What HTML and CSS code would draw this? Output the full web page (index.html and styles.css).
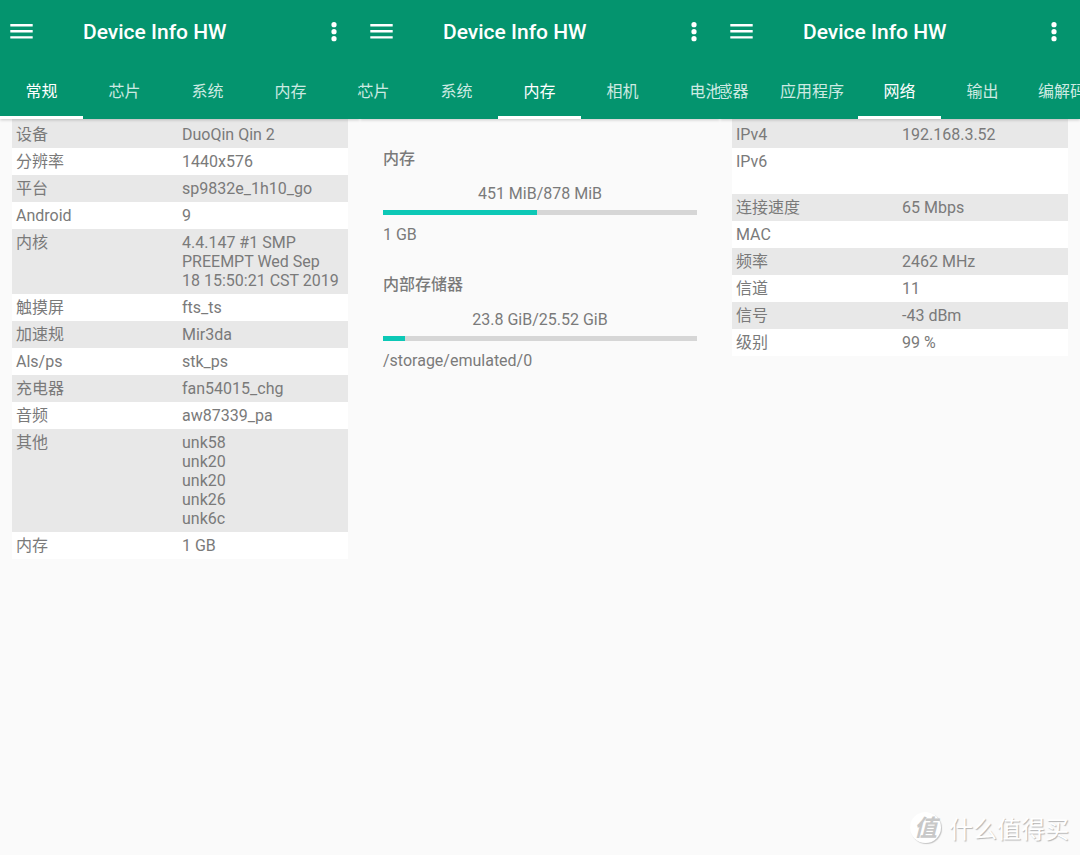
FILE: index.html
```html
<!DOCTYPE html>
<html lang="zh-CN">
<head>
<meta charset="utf-8">
<meta name="viewport" content="width=device-width, initial-scale=1">
<title>Device Info HW</title>
<link rel="stylesheet" href="styles.css">
</head>
<body>
<svg class="symbols" aria-hidden="true">
  <symbol id="menu" viewBox="0 0 24 16"><path d="M0.3 0h22.4v2.4H0.3zM0.3 6.1h22.4v2.4H0.3zM0.3 12.2h22.4v2.4H0.3z"/></symbol>
  <symbol id="more" viewBox="0 0 6 20"><circle cx="3" cy="2.7" r="2.6"/><circle cx="3" cy="9.7" r="2.6"/><circle cx="3" cy="16.7" r="2.6"/></symbol>
</svg>
<main class="screens">
  <section class="screen">
    <header class="appbar">
      <div class="toolbar">
        <button class="icon-button" aria-label="菜单"><svg class="menu-icon"><use href="#menu"/></svg></button>
        <h1 class="title">Device Info HW</h1>
        <button class="icon-button" aria-label="更多"><svg class="more-icon"><use href="#more"/></svg></button>
      </div>
      <nav class="tabs">
        <button class="tab active">常规</button><button class="tab">芯片</button><button class="tab">系统</button><button class="tab">内存</button><button class="tab">相机</button>
      </nav>
    </header>
    <table class="info">
      <tr><th scope="row">设备</th><td>DuoQin Qin 2</td></tr>
      <tr><th scope="row">分辨率</th><td>1440x576</td></tr>
      <tr><th scope="row">平台</th><td>sp9832e_1h10_go</td></tr>
      <tr><th scope="row">Android</th><td>9</td></tr>
      <tr><th scope="row">内核</th><td>4.4.147 #1 SMP<br>PREEMPT Wed Sep<br>18 15:50:21 CST 2019</td></tr>
      <tr><th scope="row">触摸屏</th><td>fts_ts</td></tr>
      <tr><th scope="row">加速规</th><td>Mir3da</td></tr>
      <tr><th scope="row">Als/ps</th><td>stk_ps</td></tr>
      <tr><th scope="row">充电器</th><td>fan54015_chg</td></tr>
      <tr><th scope="row">音频</th><td>aw87339_pa</td></tr>
      <tr><th scope="row">其他</th><td>unk58<br>unk20<br>unk20<br>unk26<br>unk6c</td></tr>
      <tr><th scope="row">内存</th><td>1 GB</td></tr>
    </table>
  </section>

  <section class="screen">
    <header class="appbar">
      <div class="toolbar">
        <button class="icon-button" aria-label="菜单"><svg class="menu-icon"><use href="#menu"/></svg></button>
        <h1 class="title">Device Info HW</h1>
        <button class="icon-button" aria-label="更多"><svg class="more-icon"><use href="#more"/></svg></button>
      </div>
      <nav class="tabs tabs-memory">
        <button class="tab">芯片</button><button class="tab">系统</button><button class="tab active">内存</button><button class="tab">相机</button><button class="tab">电池</button>
      </nav>
    </header>
    <div class="memory">
      <section class="usage">
        <h2 class="usage-title" id="ram">内存</h2>
        <p class="usage-value">451 MiB/878 MiB</p>
        <progress class="bar" aria-labelledby="ram" max="100" value="49"></progress>
        <p class="usage-note">1 GB</p>
      </section>
      <section class="usage">
        <h2 class="usage-title" id="storage">内部存储器</h2>
        <p class="usage-value">23.8 GiB/25.52 GiB</p>
        <progress class="bar" aria-labelledby="storage" max="100" value="7"></progress>
        <p class="usage-note">/storage/emulated/0</p>
      </section>
    </div>
  </section>

  <section class="screen">
    <header class="appbar">
      <div class="toolbar">
        <button class="icon-button" aria-label="菜单"><svg class="menu-icon"><use href="#menu"/></svg></button>
        <h1 class="title">Device Info HW</h1>
        <button class="icon-button" aria-label="更多"><svg class="more-icon"><use href="#more"/></svg></button>
      </div>
      <nav class="tabs tabs-network">
        <button class="tab">传感器</button><button class="tab">应用程序</button><button class="tab active">网络</button><button class="tab">输出</button><button class="tab">编解码器</button>
      </nav>
    </header>
    <table class="info">
      <tr><th scope="row">IPv4</th><td>192.168.3.52</td></tr>
      <tr><th scope="row">IPv6</th><td><br><br></td></tr>
      <tr><th scope="row">连接速度</th><td>65 Mbps</td></tr>
      <tr><th scope="row">MAC</th><td></td></tr>
      <tr><th scope="row">频率</th><td>2462 MHz</td></tr>
      <tr><th scope="row">信道</th><td>11</td></tr>
      <tr><th scope="row">信号</th><td>-43 dBm</td></tr>
      <tr><th scope="row">级别</th><td>99 %</td></tr>
    </table>
  </section>
</main>
<div class="watermark"><span class="watermark-badge">值</span><span>什么值得买</span></div>
</body>
</html>
```
FILE: styles.css
```css
* {
  box-sizing: border-box;
}

body {
  margin: 0;
  background: #fafafa;
  color: #7a7a7a;
  font: 16px/19px Roboto, "Noto Sans CJK SC", sans-serif;
}

h1, h2, p {
  margin: 0;
}

button {
  border: 0;
  padding: 0;
  background: none;
  color: inherit;
  font: inherit;
}

.symbols {
  display: none;
}

.screens {
  display: grid;
  grid-template-columns: repeat(3, minmax(0, 1fr));
  min-height: 100vh;
}

.screen {
  overflow: hidden;
}

.appbar {
  background: #04946e;
  color: #fff;
  box-shadow: 0 1px 3px rgba(0, 0, 0, 0.2);
  position: relative;
}

.toolbar {
  display: flex;
  align-items: center;
  height: 64px;
  padding: 0 23px 0 10px;
}

.icon-button {
  display: flex;
}

.menu-icon {
  width: 24px;
  height: 16px;
  fill: #fff;
}

.more-icon {
  width: 6px;
  height: 20px;
  fill: #fff;
}

.title {
  flex: 1;
  padding-left: 49px;
  font-size: 21px;
  line-height: 24px;
  font-weight: 500;
}

.tabs {
  display: flex;
  height: 55px;
}

.tabs-memory {
  margin-left: -28px;
}

.tabs-network {
  margin-left: -37px;
}

.tab {
  flex: none;
  min-width: 83px;
  padding: 3px 14px 0;
  border-bottom: 3px solid transparent;
  color: #cdeae2;
  white-space: nowrap;
}

.tab.active {
  border-bottom-color: #fff;
  color: #fff;
}

.info {
  width: calc(100% - 24px);
  margin: 0 12px;
  border-collapse: collapse;
  table-layout: fixed;
}

.info tr {
  background: #fff;
}

.info tr:nth-child(odd) {
  background: #e8e8e8;
}

.info th,
.info td {
  padding: 4px 0 4px 4px;
  font-weight: 400;
  text-align: left;
  vertical-align: top;
  line-height: 19px;
}

.info th {
  width: 166px;
}

.info tr:first-child th,
.info tr:first-child td {
  padding-top: 6px;
}

.memory {
  display: grid;
  gap: 31px;
  padding: 30px 23px;
}

.usage {
  display: flex;
  flex-direction: column;
}

.usage-title {
  font-size: 16px;
  line-height: 19px;
  font-weight: 500;
}

.usage-value {
  margin-top: 16px;
  text-align: center;
}

.bar {
  appearance: none;
  width: 100%;
  height: 5px;
  margin: 7px 0 10px;
  border: 0;
  background: #d6d6d6;
}

.bar::-webkit-progress-bar {
  background: #d6d6d6;
}

.bar::-webkit-progress-value {
  background: #0cc8b6;
}

.watermark {
  position: absolute;
  right: 11px;
  bottom: 12px;
  display: flex;
  align-items: center;
  gap: 8px;
  color: #fff;
  font: 24px/30px "Noto Sans CJK SC", sans-serif;
  text-shadow: 1px 1px 1px #b4b4b4;
}

.watermark-badge {
  width: 31px;
  height: 31px;
  border-radius: 50%;
  background: #fff;
  box-shadow: 1px 1px 1px #c4c4c4;
  color: #c8c8c8;
  font-size: 23px;
  font-style: italic;
  font-weight: 700;
  line-height: 28px;
  text-align: center;
  text-shadow: none;
}
```
